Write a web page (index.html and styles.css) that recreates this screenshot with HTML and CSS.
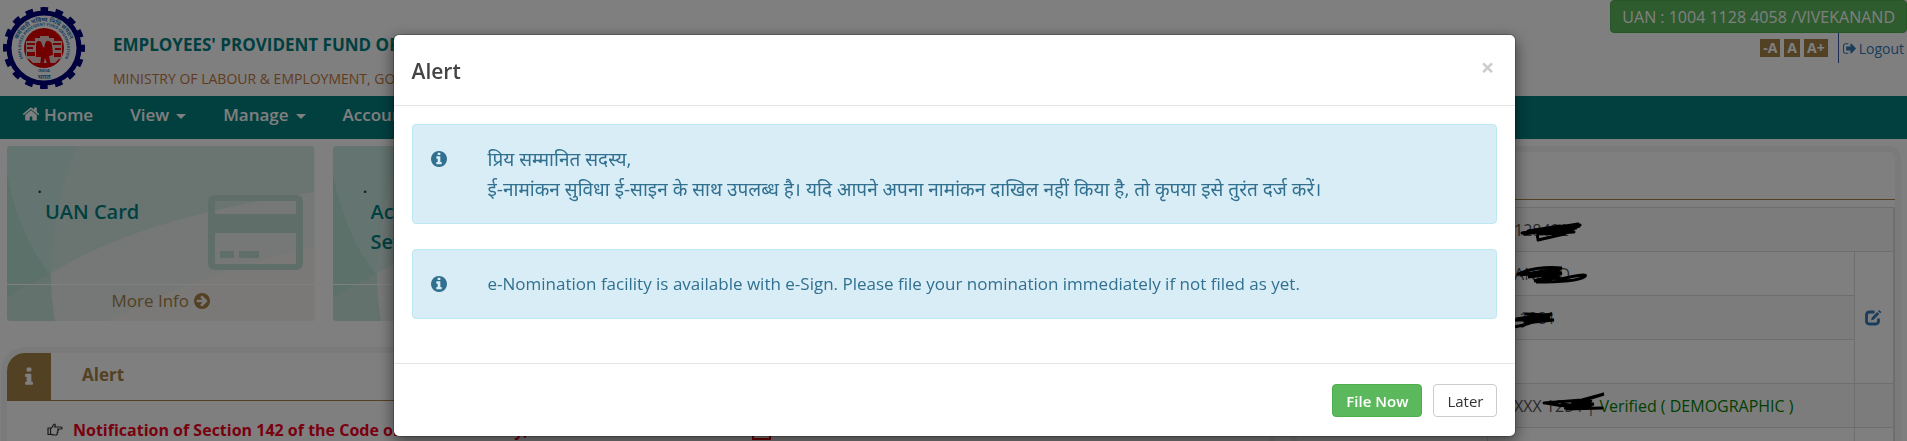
FILE: index.html
```html
<!DOCTYPE html>
<html lang="en">
<head>
  <meta charset="UTF-8" />
  <meta name="viewport" content="width=device-width, initial-scale=1" />
  <title>EPFO Member Home</title>
  <link rel="stylesheet" href="styles.css">
</head>
<body>
  <!-- shared icons -->
  <svg class="sprite" width="0" height="0">
    <symbol id="i-home" viewBox="0 0 1792 1792"><path d="M1472 992v480q0 26-19 45t-45 19h-384v-384h-256v384h-384q-26 0-45-19t-19-45v-480q0-1 .5-3t.5-3l575-474 575 474q1 2 1 6zm223-69l-62 74q-8 9-21 11h-3q-13 0-21-7l-692-577-692 577q-12 8-24 7-13-2-21-11l-62-74q-8-10-7-23.5t11-21.5l719-599q32-26 76-26t76 26l244 204v-195q0-14 9-23t23-9h192q14 0 23 9t9 23v408l219 182q10 8 11 21.5t-7 23.5z"/></symbol>
    <symbol id="i-info" viewBox="0 0 1792 1792"><path d="M1216 1344v128q0 26-19 45t-45 19h-512q-26 0-45-19t-19-45v-128q0-26 19-45t45-19h64v-384h-64q-26 0-45-19t-19-45v-128q0-26 19-45t45-19h384q26 0 45 19t19 45v576h64q26 0 45 19t19 45zm-128-1152v192q0 26-19 45t-45 19h-256q-26 0-45-19t-19-45v-192q0-26 19-45t45-19h256q26 0 45 19t19 45z"/></symbol>
    <symbol id="i-info-circle" viewBox="128 128 1536 1536"><path d="M1152 1376v-160q0-14-9-23t-23-9h-96v-512q0-14-9-23t-23-9h-320q-14 0-23 9t-9 23v160q0 14 9 23t23 9h96v320h-96q-14 0-23 9t-9 23v160q0 14 9 23t23 9h448q14 0 23-9t9-23zm-128-896v-160q0-14-9-23t-23-9h-192q-14 0-23 9t-9 23v160q0 14 9 23t23 9h192q14 0 23-9t9-23zm640 416q0 209-103 385.5t-279.5 279.5-385.5 103-385.5-103-279.5-279.5-103-385.5 103-385.5 279.5-279.5 385.5-103 385.5 103 279.5 279.5 103 385.5z"/></symbol>
    <symbol id="i-arrow-circle" viewBox="128 128 1536 1536"><path d="M1413 896q0-27-18-45l-91-91-362-362q-18-18-45-18t-45 18l-91 91q-18 18-18 45t18 45l189 189h-502q-26 0-45 19t-19 45v128q0 26 19 45t45 19h502l-189 189q-18 18-18 45t18 45l91 91q18 18 45 18t45-18l362-362 91-91q18-18 18-45zm251 0q0 209-103 385.5t-279.5 279.5-385.5 103-385.5-103-279.5-279.5-103-385.5 103-385.5 279.5-279.5 385.5-103 385.5 103 279.5 279.5 103 385.5z"/></symbol>
    <symbol id="i-logout" viewBox="64 128 1568 1536"><path d="M704 1440q0 4 1 20t.5 26.5-3 23.5-10 19.5-20.5 6.5h-320q-119 0-203.5-84.5t-84.5-203.5v-704q0-119 84.5-203.5t203.5-84.5h320q13 0 22.5 9.5t9.5 22.5q0 4 1 20t.5 26.5-3 23.5-10 19.5-20.5 6.500h-320q-66 0-113 47t-47 113v704q0 66 47 113t113 47h312l11.5 1 11.5 3 8 5.5 7 9 2 13.5zm928-544q0 26-19 45l-544 544q-19 19-45 19t-45-19-19-45v-288h-448q-26 0-45-19t-19-45v-384q0-26 19-45t45-19h448v-288q0-26 19-45t45-19 45 19l544 544q19 19 19 45z"/></symbol>
    <symbol id="i-card" viewBox="0 0 95 75"><path fill-rule="evenodd" d="M7 0h81q7 0 7 7v61q0 7-7 7H7q-7 0-7-7V7q0-7 7-7zM8 6q-1 0-1 1v12h81V7q0-1-1-1zM7 38v30q0 1 1 1h79q1 0 1-1V38zM12 56h14v7H12zM31 56h20v7H31z"/></symbol>
    <symbol id="i-hand" viewBox="0 0 16 14"><path fill="none" stroke="currentColor" stroke-width="1.2" stroke-linejoin="round" d="M1 5h2.500v6.500H1zM3.500 5.500C5 5 5.500 3.500 6 2.500 6.500 1 8 .8 8.200 2 8.400 3 7.500 4 7.500 4H14c1.500 0 1.500 2 0 2h-3.500c1.500.3 1 2-.2 2 1 .3.700 1.900-.3 1.900.7.6.2 2.100-1.200 2.100H7c-1.500 0-2-.6-3.500-.8"/></symbol>
    <symbol id="i-edit" viewBox="0 0 17 16"><path fill="none" stroke="currentColor" stroke-width="2.800" d="M9.500 2H4.500Q1.500 2 1.500 5v6q0 3 3 3h6q3 0 3-3V8.500"/><path d="M6 10.500l.8-3L12.200 2l2 2-5.400 5.600zM13 1.200L14.200 0l2.200 2-1.200 1.200z"/></symbol>
    <symbol id="card-bg" viewBox="0 0 308 175" preserveAspectRatio="none">
      <rect width="308" height="175" fill="#e0edea"/>
      <path d="M0 0H308V46Q120 75 0 152z" fill="#d5ebe5"/>
      <path d="M0 0H70Q45 60 44 140L0 152z" fill="#c9e8e0"/>
      <path d="M0 28Q12 90 44 130L0 152z" fill="#b9e2d2"/>
      <path d="M0 152Q20 138 44 128Q52 150 68 175H0z" fill="#c6e5d8"/>
      <path d="M44 128Q130 72 308 46V175H48Q44 150 44 128z" fill="#eaf0ec"/>
      <path d="M100 175Q200 125 308 100V175z" fill="#f5f2ee"/>
    </symbol>
  </svg>

  <header class="site-header">
    <svg class="logo" viewBox="0 0 82 82">
      <circle cx="41" cy="41" r="35" fill="#fff" stroke="#00007c" stroke-width="5"/>
      <circle cx="41" cy="41" r="38.500" fill="none" stroke="#00007c" stroke-width="5" stroke-dasharray="7.600 7.520" stroke-dashoffset="3.800"/>
      <circle cx="41" cy="41" r="20" fill="#e50000"/>
      <path d="M23 34h9v-3h5v-2h9v2h5v3h8v18h-3l-4 4H30l-4-4h-3z" fill="#e9c9c9"/>
      <path d="M24 36h8v2h-8zM24 40h6v2h-6zM24 45h8v4h-8zM50 36h8v2h-8zM52 41h6v2h-6zM51 46h7v4h-7zM33 38q0-4 3-4t3 4l2 3 1-4q1-4 4-3t3 4l1 10-4 1 2 10h-3l-3-8-2 8h-3l1-9h-5z" fill="#e50000"/>
      <path id="ring-top" d="M15 53A28 28 0 1 1 67 53" fill="none"/>
      <path id="ring-mid" d="M26 59A23 23 0 1 1 56 59" fill="none"/>
      <text class="ring-hi"><textPath href="#ring-top" startOffset="50%" text-anchor="middle">कर्मचारी भविष्य निधि संगठन</textPath></text>
      <text class="ring-en"><textPath href="#ring-mid" startOffset="50%" text-anchor="middle">EMPLOYEES PROVIDENT FUND ORGANISATION</textPath></text>
      <text class="ring-en" x="41" y="65" text-anchor="middle">INDIA</text>
      <text class="ring-hi" x="41" y="72" text-anchor="middle">भारत</text>
    </svg>
    <div class="org">
      <h1>EMPLOYEES' PROVIDENT FUND ORGANISATION, INDIA</h1>
      <p>MINISTRY OF LABOUR &amp; EMPLOYMENT, GOVERNMENT OF INDIA</p>
    </div>
    <div class="account">
      <div class="uan">UAN : 1004 1128 4058 /VIVEKANAND</div>
      <div class="tools">
        <button>-A</button>
        <button>A</button>
        <button>A+</button>
        <a class="logout" href="#"><svg><use href="#i-logout"/></svg>Logout</a>
      </div>
    </div>
  </header>

  <nav class="main-nav">
    <a href="#"><svg><use href="#i-home"/></svg>Home</a>
    <a href="#">View<span class="caret"></span></a>
    <a href="#">Manage<span class="caret"></span></a>
    <a href="#">Account<span class="caret"></span></a>
  </nav>

  <main class="page">
    <div class="left">
      <div class="cards">
        <section class="card">
          <svg class="bg"><use href="#card-bg"/></svg>
          <div class="card-body"><div><span class="dot">.</span><h2>UAN Card</h2></div><svg class="pic"><use href="#i-card"/></svg></div>
          <a class="more" href="#">More Info <svg><use href="#i-arrow-circle"/></svg></a>
        </section>
        <section class="card">
          <svg class="bg"><use href="#card-bg"/></svg>
          <div class="card-body"><div><span class="dot">.</span><h2>Account<br>Settings</h2></div></div>
          <a class="more" href="#">More Info</a>
        </section>
      </div>
      <section class="panel notice">
        <div class="panel-head"><span class="badge"><svg><use href="#i-info"/></svg></span><h3>Alert</h3></div>
        <a class="news" href="#"><svg><use href="#i-hand"/></svg><span>Notification of Section 142 of the Code on Social Security, 2020 related to Aadhaar</span><i class="pdf"></i></a>
      </section>
    </div>

    <section class="panel profile">
      <div class="panel-head"></div>
      <table>
        <tr><th></th><td colspan="2">XX128492<svg class="ink ink-1" viewBox="0 0 62 20"><path d="M2 11L58 2M4 12L60 4 20 12 54 10M18 17Q16 10 22 12M18 18L44 12 60 3M8 9L40 4M26 12L56 6"/></svg></td></tr>
        <tr><th></th><td>M ANAND<svg class="ink ink-2" viewBox="0 0 72 20"><path d="M2 8Q20 0 46 2L4 9 44 4 12 11 46 7 18 15 44 11 20 16Q60 16 68 11T40 14"/></svg></td><td class="edit" rowspan="3"><a href="#" aria-label="Edit"><svg><use href="#i-edit"/></svg></a></td></tr>
        <tr><th></th><td>XX-1981<svg class="ink ink-3" viewBox="0 0 44 20"><path d="M2 17Q20 14 40 4L4 9 38 7 12 13 42 10 2 10M14 4L36 5 10 16"/></svg></td></tr>
        <tr><th></th><td></td></tr>
        <tr><th></th><td>XXXXX 1234 |<span class="verified">Verified ( DEMOGRAPHIC )</span><svg class="ink ink-4" viewBox="0 0 64 20"><path d="M2 11L40 8 62 2 30 12 50 8 22 16 52 12 24 17 60 16M20 12L50 16M4 11Q30 17 48 10"/></svg></td><td></td></tr>
        <tr><th></th><td></td><td></td></tr>
      </table>
    </section>
  </main>

  <div class="backdrop">
    <div class="modal" role="dialog" aria-labelledby="modal-title">
      <div class="modal-header">
        <h4 id="modal-title">Alert</h4>
        <button class="close" aria-label="Close">×</button>
      </div>
      <div class="modal-body">
        <div class="alert">
          <svg><use href="#i-info-circle"/></svg>
          <p lang="hi">प्रिय सम्मानित सदस्य,<br>ई-नामांकन सुविधा ई-साइन के साथ उपलब्ध है। यदि आपने अपना नामांकन दाखिल नहीं किया है, तो कृपया इसे तुरंत दर्ज करें।</p>
        </div>
        <div class="alert">
          <svg><use href="#i-info-circle"/></svg>
          <p>e-Nomination facility is available with e-Sign. Please file your nomination immediately if not filed as yet.</p>
        </div>
      </div>
      <div class="modal-footer">
        <button class="btn btn-success">File Now</button>
        <button class="btn">Later</button>
      </div>
    </div>
  </div>
</body>
</html>
```
FILE: styles.css
```css
* {
  box-sizing: border-box;
}

body {
  margin: 0;
  height: 100vh;
  overflow: hidden;
  background: #fff;
  color: #333;
  font-family: "Segoe UI", "Open Sans", "Noto Sans", sans-serif;
  font-size: 17px;
}

h1, h2, h3, h4, p {
  margin: 0;
}

a {
  color: #337ab7;
  text-decoration: none;
}

svg {
  fill: currentColor;
}

button {
  font-family: inherit;
  cursor: pointer;
}

.sprite {
  position: absolute;
}

/* header */
.site-header {
  display: flex;
  height: 96px;
}

.logo {
  width: 82px;
  height: 82px;
  margin: 7px 28px 0 3px;
}

.ring-hi, .ring-en {
  fill: #2a78c0;
  font-size: 6px;
  font-weight: bold;
}

.ring-en {
  font-size: 4px;
}

.org {
  padding-top: 31px;
}

.org h1 {
  color: #008080;
  font-size: 17px;
  line-height: 28px;
}

.org p {
  margin-top: 6px;
  color: #c27840;
  font-size: 14px;
  line-height: 28px;
}

.account {
  margin-left: auto;
}

.uan {
  height: 33px;
  padding: 0 11px;
  border: 1px solid #4cae4c;
  border-radius: 4px;
  background: #5cb85c;
  color: #fff;
  font-size: 16px;
  line-height: 32px;
}

.tools {
  display: flex;
  justify-content: flex-end;
  gap: 4px;
  padding-right: 3px;
}

.tools button {
  height: 18px;
  margin-top: 6px;
  padding: 0 3px;
  border: 0;
  background: #a68246;
  color: #fff;
  font-size: 14px;
  font-weight: bold;
  line-height: 18px;
}

.logout {
  display: flex;
  align-items: center;
  gap: 3px;
  height: 30px;
  margin-left: 6px;
  padding-left: 4px;
  border-left: 1px solid #3a54a4;
  font-size: 14px;
}

.logout svg {
  width: 13px;
  height: 13px;
}

/* navigation */
.main-nav {
  display: flex;
  gap: 37px;
  height: 43px;
  padding: 4px 22px;
  background: #048081;
}

.main-nav a {
  display: flex;
  align-items: center;
  height: 28px;
  color: #fff;
  font-size: 17px;
  font-weight: 600;
}

.main-nav svg {
  width: 18px;
  height: 18px;
  margin-right: 4px;
}

.caret {
  margin: 4px 0 0 7px;
  border: 5px solid transparent;
  border-top-color: #fff;
  border-bottom: 0;
}

/* dashboard */
.page {
  display: flex;
  padding: 7px 6px 0 1px;
}

.left {
  flex: 0 0 1290px;
}

.cards {
  display: grid;
  grid-template-columns: repeat(4, 1fr);
  gap: 18px;
  padding-left: 6px;
}

.card {
  position: relative;
  height: 175px;
  border-radius: 4px;
  overflow: hidden;
}

.bg {
  position: absolute;
  width: 100%;
  height: 100%;
  z-index: -1;
}

.card-body {
  display: flex;
  justify-content: space-between;
  height: 139px;
  padding: 29px 12px 0 30px;
  border-bottom: 1px solid #fff;
}

.dot {
  display: block;
  font-size: 20px;
  line-height: 22px;
}

.card h2 {
  padding-left: 8px;
  color: #008080;
  font-size: 20px;
  font-weight: 600;
  line-height: 30px;
}

.pic {
  width: 95px;
  height: 75px;
  margin-top: 20px;
  color: #c0dcd3;
}

.more {
  display: flex;
  align-items: center;
  justify-content: center;
  gap: 5px;
  height: 31px;
  color: #a68246;
}

.more svg {
  width: 16px;
  height: 16px;
}

.panel {
  border: 6px solid #f4f4f4;
  border-radius: 12px;
  background: #fff;
}

.panel-head {
  display: flex;
  align-items: center;
  height: 48px;
  border-bottom: 1px solid #a68246;
}

.notice {
  width: 1274px;
  margin-top: 26px;
  border-top-left-radius: 24px;
}

.badge {
  display: flex;
  align-items: center;
  justify-content: center;
  width: 44px;
  height: 48px;
  border-top-left-radius: 18px;
  background: #a68246;
  color: #fff;
}

.badge svg {
  width: 22px;
  height: 22px;
}

.panel-head h3 {
  margin-left: 31px;
  color: #a68246;
  font-size: 17px;
  line-height: 24px;
  padding-bottom: 3px;
}

.news {
  display: flex;
  align-items: center;
  height: 57px;
  padding-left: 40px;
  color: #333;
}

.news span {
  margin-left: 10px;
  color: #f2001c;
  font-size: 16px;
  font-weight: bold;
}

.news svg {
  width: 16px;
  height: 14px;
}

.pdf {
  width: 19px;
  height: 20px;
  margin-left: 28px;
  border: 2px solid #e00000;
}

.profile {
  flex: 1;
  min-height: 320px;
}

.profile table {
  width: 100%;
  margin-top: 7px;
  border-collapse: collapse;
  border-right: 2px solid #ddd;
}

.profile tr {
  height: 44px;
}

.profile tr:nth-child(odd) {
  background: #f9f9f9;
}

.profile th {
  width: 190px;
}

.profile td {
  position: relative;
  padding: 0 8px;
  border: 1px solid #ddd;
  color: #555;
  font-size: 16px;
}

.profile .edit {
  width: 40px;
  padding: 0 0 0 10px;
  background: #fff;
}

.edit svg {
  display: block;
  width: 17px;
  height: 16px;
}

.verified {
  margin-left: 4px;
  color: #008000;
}

/* marker strokes over the masked values */
.ink {
  position: absolute;
  top: 14px;
  height: 20px;
  fill: none;
  stroke: #000;
  stroke-width: 3;
  stroke-linecap: round;
}

.ink-1 { left: 32px; width: 62px; }
.ink-2 { left: 28px; width: 72px; }
.ink-3 { left: 24px; width: 44px; }
.ink-4 { left: 54px; width: 64px; top: 8px; }

/* modal */
.backdrop {
  position: fixed;
  inset: 0;
  padding: 34px 0 0 2px;
  background: rgba(0, 0, 0, 0.5);
}

.modal {
  width: 59%;
  margin: 0 auto;
  border: 1px solid rgba(0, 0, 0, 0.2);
  border-radius: 6px;
  background: #fff;
  background-clip: padding-box;
  box-shadow: 0 5px 15px rgba(0, 0, 0, 0.5);
}

.modal-header {
  display: flex;
  justify-content: space-between;
  height: 71px;
  padding: 21px 18px;
  border-bottom: 1px solid #e5e5e5;
}

.modal-header h4 {
  color: #444;
  font-size: 21px;
  font-weight: 600;
  line-height: 30px;
}

.close {
  height: 22px;
  padding: 0 3px;
  border: 0;
  background: none;
  color: #ccc;
  font-size: 24px;
  font-weight: bold;
  line-height: 20px;
}

.modal-body {
  padding: 18px 18px 44px;
}

.alert {
  display: flex;
  gap: 41px;
  padding: 19px 18px;
  border: 1px solid #bce8f1;
  border-radius: 4px;
  background: #d9edf7;
  color: #31708f;
  line-height: 30px;
}

.alert + .alert {
  margin-top: 25px;
}

.alert p:lang(hi) {
  font-size: 19px;
}

.alert svg {
  width: 16px;
  height: 16px;
  margin-top: 7px;
}

.modal-footer {
  display: flex;
  justify-content: flex-end;
  gap: 11px;
  padding: 20px 18px 19px;
  border-top: 1px solid #e5e5e5;
}

.btn {
  height: 33px;
  padding: 0 13px;
  border: 1px solid #ccc;
  border-radius: 4px;
  background: #fff;
  color: #333;
  font-size: 15px;
}

.btn-success {
  border-color: #4cae4c;
  background: #5cb85c;
  color: #fff;
  font-weight: 600;
}
```
